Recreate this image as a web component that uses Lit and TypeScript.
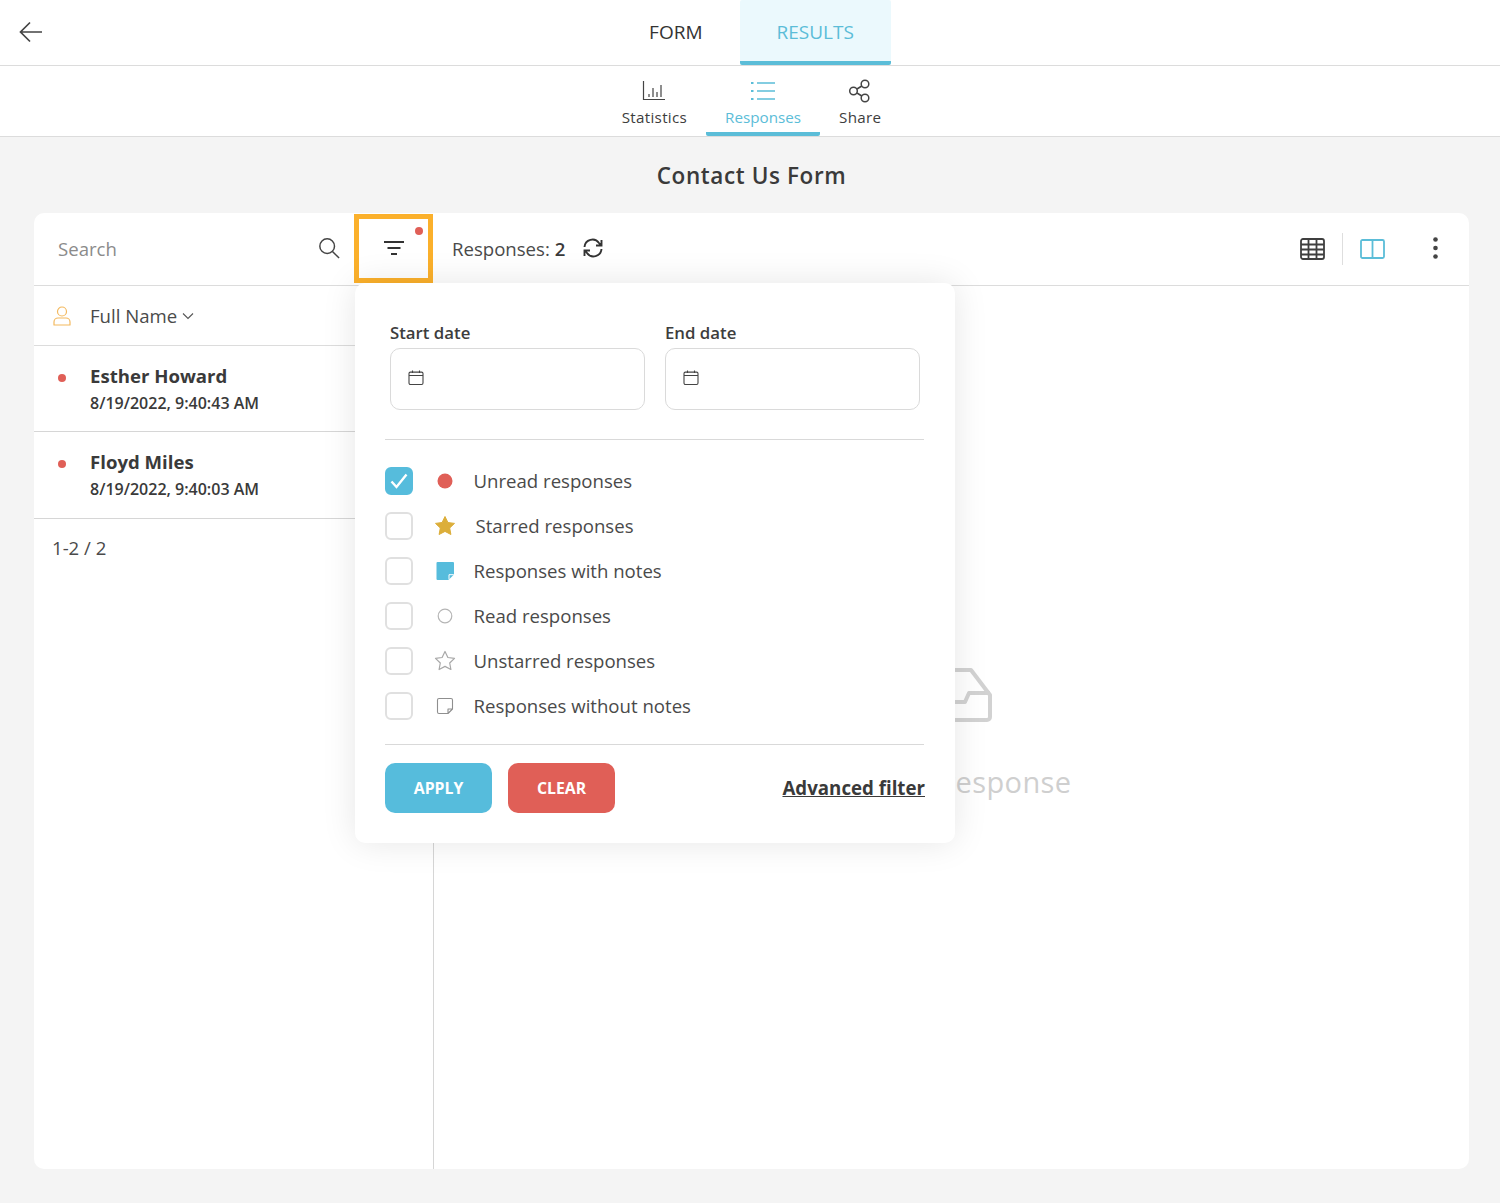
import { LitElement, css, html, svg } from 'lit';
import { customElement } from 'lit/decorators.js';

const filters = [
  { label: 'Unread responses', icon: 'dot', checked: true },
  { label: 'Starred responses', icon: 'star', shift: true },
  { label: 'Responses with notes', icon: 'note' },
  { label: 'Read responses', icon: 'ring' },
  { label: 'Unstarred responses', icon: 'star-o' },
  { label: 'Responses without notes', icon: 'note-o' },
];

const people = [
  { name: 'Esther Howard', date: '8/19/2022, 9:40:43 AM' },
  { name: 'Floyd Miles', date: '8/19/2022, 9:40:03 AM' },
];

const STAR = 'M12 2.5l2.9 6 6.6.9-4.8 4.6 1.2 6.5L12 17.4l-5.9 3.1 1.2-6.5L2.5 9.4l6.6-.9z';

function filterIcon(kind: string) {
  switch (kind) {
    case 'dot':
      return svg`<circle cx="12" cy="12" r="7.5" fill="#e05f57" />`;
    case 'ring':
      return svg`<circle cx="12" cy="12" r="6.8" fill="none" stroke="#b5b5b5" stroke-width="1.2" />`;
    case 'star':
      return svg`<path d=${STAR} fill="#dcae3a" stroke="#dcae3a" stroke-width="1" stroke-linejoin="round" />`;
    case 'star-o':
      return svg`<path d=${STAR} fill="none" stroke="#a8a8a8" stroke-width="1.2" stroke-linejoin="round" />`;
    case 'note':
      return svg`<path d="M3.500 4a1 1 0 0 1 1-1h15.500a1 1 0 0 1 1 1v16a1 1 0 0 1-1 1H4.500a1 1 0 0 1-1-1z" fill="#56bcdc" />
        <path d="M21 15.500l-5.500 5.500H21z" fill="#fff" />
        <path d="M16 20.500v-4.800h4.800" fill="none" stroke="#fff" stroke-width="1" />`;
    default:
      return svg`<path d="M4.500 6a1.500 1.500 0 0 1 1.500-1.500h12A1.500 1.500 0 0 1 19.500 6v9L15 19.500H6A1.500 1.500 0 0 1 4.500 18z M19.500 15H15v4.500" fill="none" stroke="#8f8f8f" stroke-width="1.100" stroke-linejoin="round" />`;
  }
}

const calendar = html`<svg class="cal" viewBox="0 0 16 16" fill="none" stroke="#444" stroke-width="1.1">
  <rect x="1" y="2.6" width="14" height="12.4" rx="1.4" />
  <path d="M1 6h14M4.5 1v2.4M11.5 1v2.4" />
</svg>`;

@customElement('app-root')
export class AppRoot extends LitElement {
  static override styles = css`
    :host {
      display: block;
      min-height: 1203px;
      background: #f4f4f4;
      font-family: 'Open Sans', 'Noto Sans', sans-serif;
      color: #3d3d3d;
    }
    svg {
      display: block;
      flex: none;
    }
    .top {
      height: 65px;
      background: #fff;
      border-bottom: 1px solid #dcdcdc;
      display: flex;
      justify-content: center;
      padding-left: 3px;
      position: relative;
    }
    .back {
      position: absolute;
      left: 18px;
      top: 19px;
    }
    .tab {
      padding: 0 37px;
      line-height: 64px;
      height: 65px;
      box-sizing: border-box;
      font-size: 19px;
      font-weight: 500;
      color: #333;
    }
    .tab.on {
      color: #5bbdd8;
      background: #ebf9fd;
      border-bottom: 4px solid #5bbdd8;
      border-radius: 2px;
    }
    .sub {
      height: 70px;
      background: #fff;
      border-bottom: 1px solid #dcdcdc;
      display: flex;
      justify-content: center;
      padding-left: 3px;
    }
    .subitem {
      box-sizing: border-box;
      height: 70px;
      padding: 13px 19px 0;
      font-size: 15.2px;
      line-height: 20px;
      font-weight: 500;
      letter-spacing: 0.3px;
      color: #3d3d3d;
      display: flex;
      flex-direction: column;
      align-items: center;
      gap: 4px;
    }
    .subitem.on {
      color: #5bbdd8;
      letter-spacing: 0;
      border-bottom: 4px solid #5bbdd8;
      border-radius: 2px;
    }
    h1 {
      margin: 0;
      height: 76px;
      line-height: 77px;
      text-align: center;
      padding-left: 3px;
      font-size: 22.5px;
      font-weight: 600;
      letter-spacing: 0.6px;
      color: #3a3a3a;
    }
    .card {
      position: relative;
      margin: 0 31px 0 34px;
      height: 956px;
      background: #fff;
      border-radius: 10px;
      display: flex;
      flex-direction: column;
    }
    .bar {
      height: 73px;
      flex: none;
      box-sizing: border-box;
      border-bottom: 1px solid #dcdcdc;
      display: flex;
      align-items: center;
    }
    .search {
      width: 320px;
      box-sizing: border-box;
      padding: 0 14px 2px 24px;
      display: flex;
      justify-content: space-between;
      align-items: center;
      font-size: 18.6px;
      color: #8b8b8b;
    }
    .filter {
      box-sizing: border-box;
      width: 79px;
      height: 69px;
      margin-bottom: 2px;
      border: 5px solid #fbb02b;
      display: flex;
      align-items: center;
      justify-content: center;
      position: relative;
    }
    .filter i {
      position: absolute;
      top: 8px;
      right: 5px;
      width: 8px;
      height: 8px;
      border-radius: 50%;
      background: #e05f57;
    }
    .count {
      margin-left: 19px;
      padding-bottom: 2px;
      font-size: 18.6px;
      color: #4a4a4a;
      display: flex;
      align-items: center;
      gap: 18px;
    }
    .count b {
      font-weight: 600;
      color: #3a3a3a;
    }
    .tools {
      margin-left: auto;
      display: flex;
      align-items: center;
    }
    .sep {
      width: 1px;
      height: 32px;
      background: #dedede;
      margin: 0 17px 0 17px;
    }
    .kebab {
      margin: -2px 31px 0 48px;
    }
    .body {
      flex: 1;
      display: flex;
      min-height: 0;
    }
    .list {
      width: 400px;
      box-sizing: border-box;
      border-right: 1px solid #d6d6d6;
    }
    .head {
      height: 60px;
      box-sizing: border-box;
      border-bottom: 1px solid #dcdcdc;
      display: flex;
      align-items: center;
      padding-left: 19px;
      font-size: 18.6px;
      color: #4a4a4a;
    }
    .head span {
      margin-left: 19px;
      margin-right: 5px;
    }
    .row {
      height: 86px;
      box-sizing: border-box;
      border-bottom: 1px solid #d6d6d6;
      padding: 16.5px 0 0 56px;
      position: relative;
    }
    .row + .row {
      height: 87px;
    }
    .row i {
      position: absolute;
      left: 24px;
      top: 28px;
      width: 8px;
      height: 8px;
      border-radius: 50%;
      background: #e05f57;
    }
    .name {
      font-size: 18.6px;
      font-weight: 700;
      line-height: 26px;
      color: #3a3a3a;
    }
    .date {
      margin-top: 1px;
      font-size: 16px;
      font-weight: 600;
      line-height: 26px;
      color: #3a3a3a;
    }
    .pager {
      padding: 16px 0 0 18px;
      font-size: 18.6px;
      line-height: 26px;
      color: #4a4a4a;
    }
    .empty {
      flex: 1;
      display: flex;
      flex-direction: column;
      align-items: center;
      padding-top: 382px;
      gap: 40px;
      font-size: 29px;
      color: #cfcfcf;
    }
    .empty div {
      line-height: 40px;
      letter-spacing: 0.4px;
      margin-right: 3px;
    }
    .pop {
      position: absolute;
      left: 321px;
      top: 70px;
      width: 600px;
      height: 560px;
      box-sizing: border-box;
      padding: 36px 31px 0 30px;
      background: #fff;
      border-radius: 10px;
      box-shadow: 0 0 34px rgba(0, 0, 0, 0.1);
      display: flex;
      flex-direction: column;
    }
    .dates {
      display: grid;
      grid-template-columns: 254.5px 254.5px;
      gap: 20.5px;
      padding: 0 0 29px 5px;
      border-bottom: 1px solid #d9d9d9;
    }
    label {
      display: block;
      font-size: 16.8px;
      font-weight: 600;
      line-height: 27px;
      margin-bottom: 2px;
      color: #3d3d3d;
    }
    .input {
      box-sizing: border-box;
      height: 62px;
      border: 1px solid #dadada;
      border-radius: 10px;
      display: flex;
      align-items: center;
      padding: 0 0 4px 17px;
    }
    .cal {
      width: 16px;
      height: 17px;
    }
    .checks {
      display: flex;
      flex-direction: column;
      gap: 17px;
      padding: 27px 0 24px;
      border-bottom: 1px solid #d9d9d9;
    }
    .check {
      display: flex;
      align-items: center;
      height: 28px;
      font-size: 18.6px;
      color: #4a4a4a;
    }
    .check span {
      margin-top: -2px;
    }
    .box {
      box-sizing: border-box;
      width: 28px;
      height: 28px;
      border: 2px solid #e0e0e0;
      border-radius: 6px;
      display: flex;
      align-items: center;
      justify-content: center;
    }
    .box.on {
      background: #56bcdc;
      border-color: #56bcdc;
    }
    .mark {
      width: 24px;
      height: 24px;
      margin: 0 16.5px 0 20px;
    }
    .check span.shift {
      margin-left: 2px;
    }
    .actions {
      display: flex;
      align-items: center;
      gap: 16px;
      padding-top: 18px;
    }
    .btn {
      height: 50px;
      line-height: 50px;
      border-radius: 10px;
      text-align: center;
      color: #fff;
      font-size: 15.8px;
      font-weight: 700;
      width: 107px;
      background: #56bcdc;
    }
    .btn.red {
      background: #e05f57;
    }
    .adv {
      margin: -2px -1px 0 auto;
      font-size: 18.7px;
      font-weight: 700;
      color: #3a3a3a;
      text-decoration: underline;
    }
  `;

  override render() {
    return html`
      <div class="top">
        <svg class="back" width="26" height="26" viewBox="0 0 26 26" fill="none" stroke="#444" stroke-width="1.7">
          <path d="M24 13H3M12 3.5L2.5 13l9.5 9.5" />
        </svg>
        <div class="tab">FORM</div>
        <div class="tab on">RESULTS</div>
      </div>
      <div class="sub">
        <div class="subitem">
          <svg width="24" height="24" viewBox="0 -2 24 24" fill="none" stroke="#444" stroke-width="1.2">
            <path d="M1.500 0v18.500h21.500M7 16v-3M11 16V7M15 16v-5M19 16V4" />
          </svg>
          Statistics
        </div>
        <div class="subitem on">
          <svg width="24" height="24" viewBox="0 -2 24 24" fill="none" stroke="#5bbdd8" stroke-width="1.3">
            <path d="M6 2h18M6 10h18M6 18h18" />
            <path d="M0 2h2.500M0 10h2.500M0 18h2.500" stroke-width="2" />
          </svg>
          Responses
        </div>
        <div class="subitem">
          <svg width="24" height="24" viewBox="-1 0 24 24" fill="none" stroke="#444" stroke-width="1.500">
            <circle cx="16" cy="5" r="3.800" />
            <circle cx="16" cy="19" r="3.800" />
            <circle cx="4.500" cy="12" r="3.800" />
            <path d="M8 10l4.800-3M8 14l4.800 3" />
          </svg>
          Share
        </div>
      </div>
      <h1>Contact Us Form</h1>
      <div class="card">
        <div class="bar">
          <div class="search">
            Search
            <svg width="22" height="22" viewBox="0 0 24 24" fill="none" stroke="#444" stroke-width="1.600">
              <circle cx="10" cy="10" r="8" />
              <path d="M15.800 15.800L23 23" />
            </svg>
          </div>
          <div class="filter">
            <svg width="20" height="16" viewBox="0 0 20 16" fill="none" stroke="#333" stroke-width="2.200">
              <path d="M0 2h20M3.500 8h13M7 14h6" />
            </svg>
            <i></i>
          </div>
          <div class="count">
            <span>Responses: <b>2</b></span>
            <svg width="20" height="20" viewBox="0 0 20 20" fill="none" stroke="#333" stroke-width="1.900">
              <path d="M1.500 9A8 8 0 0 1 16 5l2 2.500M18.500 11A8 8 0 0 1 4 15l-2-2.500M18.500 2v5.500H13M1.500 18v-5.500H7" />
            </svg>
          </div>
          <div class="tools">
            <svg width="25" height="22" viewBox="0 0 25 22" fill="none" stroke="#3f3f3f" stroke-width="1.800">
              <rect x="1" y="1" width="23" height="20" rx="2" />
              <path d="M1 6.500h23M1 11.500h23M1 16.500h23M8.500 1v20M16.500 1v20" />
            </svg>
            <div class="sep"></div>
            <svg width="25" height="20" viewBox="0 0 25 20" fill="none" stroke="#5bbdd8" stroke-width="1.800">
              <rect x="1" y="1" width="23" height="18" rx="1.500" />
              <path d="M12.500 1v18" />
            </svg>
            <svg class="kebab" width="5" height="22" viewBox="0 0 5 22" fill="#444">
              <circle cx="2.500" cy="2.500" r="2.300" />
              <circle cx="2.500" cy="11" r="2.300" />
              <circle cx="2.500" cy="19.500" r="2.300" />
            </svg>
          </div>
        </div>
        <div class="body">
          <div class="list">
            <div class="head">
              <svg width="18" height="20" viewBox="0 0 18 20" fill="none" stroke="#f3b95f" stroke-width="1.200">
                <circle cx="9" cy="5.500" r="4.500" />
                <path d="M1 19v-3a4 4 0 0 1 4-4h8a4 4 0 0 1 4 4v3z" stroke-linejoin="round" />
              </svg>
              <span>Full Name</span>
              <svg width="12" height="8" viewBox="0 0 12 8" fill="none" stroke="#555" stroke-width="1.100">
                <path d="M1 1.500l5 5 5-5" />
              </svg>
            </div>
            ${people.map(
              (p) => html`<div class="row">
                <i></i>
                <div class="name">${p.name}</div>
                <div class="date">${p.date}</div>
              </div>`,
            )}
            <div class="pager">1-2 / 2</div>
          </div>
          <div class="empty">
            <svg width="80" height="54" viewBox="0 0 80 54" fill="none" stroke="#d2d2d2" stroke-width="4" stroke-linejoin="round">
              <path d="M21 2h38l19 25v22a3 3 0 0 1-3 3H5a3 3 0 0 1-3-3V27z" />
              <path d="M2 25h21l4 9h26l4-9h21" />
            </svg>
            <div>Select a response</div>
          </div>
        </div>
        <div class="pop">
          <div class="dates">
            <div>
              <label>Start date</label>
              <div class="input">${calendar}</div>
            </div>
            <div>
              <label>End date</label>
              <div class="input">${calendar}</div>
            </div>
          </div>
          <div class="checks">
            ${filters.map(
              (f) => html`<div class="check">
                <div class="box ${f.checked ? 'on' : ''}">
                  ${f.checked
                    ? html`<svg width="20" height="18" viewBox="0 0 20 18" fill="none" stroke="#fff" stroke-width="2.400">
                        <path d="M2.500 9.500l5 5.500L17.500 2.500" />
                      </svg>`
                    : ''}
                </div>
                <svg class="mark" viewBox="0 0 24 24">${filterIcon(f.icon)}</svg>
                <span class=${f.shift ? 'shift' : ''}>${f.label}</span>
              </div>`,
            )}
          </div>
          <div class="actions">
            <div class="btn">APPLY</div>
            <div class="btn red">CLEAR</div>
            <div class="adv">Advanced filter</div>
          </div>
        </div>
      </div>
    `;
  }
}
